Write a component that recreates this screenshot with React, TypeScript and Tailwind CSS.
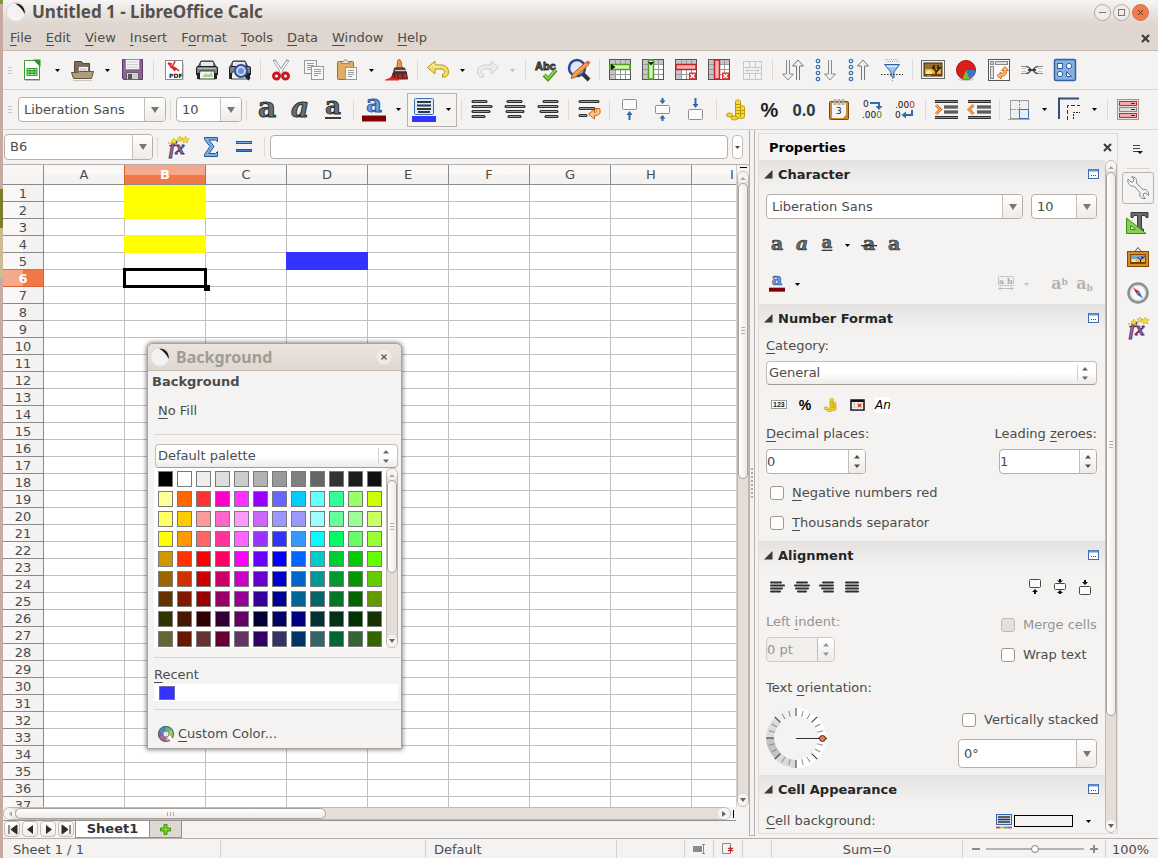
import { useState } from 'react'
import type { ReactNode } from 'react'

const palette = [
  '000000 ffffff eeeeee dddddd cccccc b2b2b2 999999 808080 666666 333333 1c1c1c 111111',
  'ffff99 ff6600 ff3333 ff00cc ff33ff 9900ff 6666ff 00ccff 66ffff 33ff99 99ff66 ccff00',
  'ffff66 ffcc00 ff9999 ff66cc ff99ff cc66ff 9999ff 9999ff 99ffff 66ff99 99ff99 ccff66',
  'ffff00 ff9900 ff6666 ff3399 ff66ff 9933ff 3333ff 3399ff 00ffff 00ff66 66ff66 99ff33',
  'cc9900 ff3300 ff0000 ff0066 ff00ff 6600ff 0000ff 0066ff 00cccc 00cc33 00cc00 66ff00',
  '996600 cc3300 cc0000 cc0066 cc00cc 6600cc 0000cc 0066cc 009999 009933 009900 66cc00',
  '663300 801900 990000 990066 990099 330099 000099 006699 006666 007826 006600 669900',
  '333300 461900 330000 330033 660066 000033 000066 000080 003333 00331a 003300 193300',
  '666633 661900 663333 660033 663366 330066 333366 003366 336666 006633 336633 336600',
].map((row) => row.split(' '))

const columns = ['A', 'B', 'C', 'D', 'E', 'F', 'G', 'H', 'I']
const rows = Array.from({ length: 37 }, (_, i) => i + 1)
const menus = ['_File', '_Edit', '_View', '_Insert', 'F_ormat', '_Tools', '_Data', '_Window', '_Help']

const fills: Record<string, string> = {
  B1: 'bg-[#ffff00] border-[#ffff00] shadow-[-1px_0_0_#ffff00,0_-1px_0_#ffff00]',
  B2: 'bg-[#ffff00] border-[#ffff00] shadow-[-1px_0_0_#ffff00,0_-1px_0_#ffff00]',
  B4: 'bg-[#ffff00] border-[#ffff00] shadow-[-1px_0_0_#ffff00,0_-1px_0_#ffff00,-1px_-1px_0_#ffff00]',
  D5: 'bg-[#3333ff] border-[#3333ff] shadow-[-1px_0_0_#3333ff,0_-1px_0_#3333ff,-1px_-1px_0_#3333ff]',
}

// "_File" underlines the letter after the underscore
function Mnemonic({ text }: { text: string }) {
  const i = text.indexOf('_')
  if (i < 0) return <>{text}</>
  return (
    <>
      {text.slice(0, i)}
      <span className="underline underline-offset-3">{text[i + 1]}</span>
      {text.slice(i + 2)}
    </>
  )
}

function Svg({ children, w = 24, h = 24 }: { children: ReactNode; w?: number; h?: number }) {
  return (
    <svg width={w} height={h} viewBox={`0 0 ${w} ${h}`} fill="none" aria-hidden="true" className="shrink-0 overflow-visible">
      {children}
    </svg>
  )
}

/* ---------- toolbar icons ---------- */

const NewIcon = () => (
  <Svg>
    <path d="M3.500 2.500h10l5 5v14h-15z" fill="#fff" stroke="#3a9a3a" />
    <path d="M12 1.500h7.500V9z" fill="#2c962c" />
    <rect x="5.500" y="10" width="11" height="8" fill="#2fa02f" />
    <path d="M6.500 11.500h2m1 0h3m1 0h2M6.500 14h2m1 0h3m1 0h2M6.500 16.500h2m1 0h3m1 0h2" stroke="#d3f3c8" />
    <path d="M4 22.500h15" stroke="#bdbdbd" />
  </Svg>
)
const OpenIcon = () => (
  <Svg>
    <path d="M3.500 5.500v-2h7l2 2h6v12h-15z" fill="#7d6b57" stroke="#54452f" />
    <path d="M7.500 8.500h10v9h-10z" fill="#f6f6f4" stroke="#777" />
    <path d="M9 11h7M9 13h7" stroke="#bbb" />
    <path d="M.5 14.500h6l2-1h14L20.500 20.500H2.500z" fill="#b09c80" stroke="#6c5737" />
    <path d="M2 22.500h19" stroke="#c9c5c0" />
  </Svg>
)
const SaveIcon = () => (
  <Svg>
    <path d="M1.500 1.500h20v20h-19l-1-1z" fill="#8f609b" stroke="#5d3a68" />
    <rect x="4.500" y="1.500" width="14" height="10" fill="#f6f6f6" stroke="#9c84a4" />
    <path d="M6 4h11M6 6.500h11M6 9h11" stroke="#ccc" />
    <rect x="5.500" y="14.500" width="12" height="7" fill="#cfcfcf" stroke="#666" />
    <rect x="7" y="16" width="4" height="5" fill="#555" />
  </Svg>
)
const PdfIcon = () => (
  <Svg>
    <rect x="3.500" y="2.500" width="17" height="19" fill="#fff" stroke="#8a8a8a" />
    <path d="M6 5l7 8M6 5l4 1M13 3c-1 3-3 6-5 6 3-1 6 1 9 4M11 9l3 3" stroke="#d92a2a" strokeWidth="1.500" />
    <path d="M20.500 21.500h1v-16" stroke="#ccc" />
    <text x="7" y="20" fontSize="6" fontWeight="bold" fontFamily="DejaVu Sans" fill="#111">PDF</text>
  </Svg>
)
const PrintIcon = () => (
  <Svg>
    <path d="M3 9l3-6h12l3 6z" fill="#70777a" stroke="#333" />
    <path d="M6 4h12v5H6z" fill="#e8e8e8" />
    <rect x="1.500" y="8.500" width="21" height="9" rx="1.500" fill="#7b8284" stroke="#1d1f20" />
    <path d="M3 10.500h18" stroke="#b5bbbc" />
    <path d="M5 13h14l1.500 8h-17z" fill="#f4f4f4" stroke="#444" />
    <path d="M7 19l4-4 2 2 4-3 1 5z" fill="#a6d68a" />
    <rect x="2" y="15" width="3" height="6" fill="#222" />
    <rect x="19" y="15" width="3" height="6" fill="#222" />
  </Svg>
)
const PreviewIcon = () => (
  <Svg>
    <path d="M2 9l3-6h12l3 6z" fill="#70777a" stroke="#333" />
    <path d="M5 4h12v5H5z" fill="#e8e8e8" />
    <rect x="1.500" y="8.500" width="21" height="9" rx="1.500" fill="#7b8284" stroke="#1d1f20" />
    <path d="M4 14h15l1 7H3z" fill="#f4f4f4" stroke="#444" />
    <rect x="1" y="15" width="3" height="6" fill="#222" />
    <rect x="19" y="15" width="3" height="6" fill="#222" />
    <circle cx="13" cy="13" r="6" fill="#c8d4f0" stroke="#2c4f9e" strokeWidth="2" />
    <circle cx="13" cy="13" r="3" fill="#6d8fd0" />
    <path d="M17.500 17.500l4 4" stroke="#222" strokeWidth="3" />
  </Svg>
)
const CutIcon = () => (
  <Svg>
    <path d="M5 2l8.500 13M19 2l-8.500 13" stroke="#8c8c8c" strokeWidth="3" />
    <path d="M5.500 3l8 12M18.500 3l-8 12" stroke="#fafafa" strokeWidth="1.500" />
    <ellipse cx="7.500" cy="18" rx="3" ry="3" stroke="#c81722" strokeWidth="3" />
    <ellipse cx="16.500" cy="18" rx="3" ry="3" stroke="#c81722" strokeWidth="3" />
  </Svg>
)
const CopyIcon = () => (
  <Svg>
    <rect x="2.500" y="2.500" width="12" height="13" fill="#f7f7f7" stroke="#999" />
    <path d="M5 5.500h7M5 7.500h7M5 9.500h7M5 11.500h4" stroke="#9a9a9a" />
    <rect x="9.500" y="8.500" width="12" height="13" fill="#f7f7f7" stroke="#999" />
    <path d="M12 11.500h7M12 13.500h7M12 15.500h7M12 17.500h4" stroke="#9a9a9a" />
  </Svg>
)
const PasteIcon = () => (
  <Svg>
    <rect x="2.500" y="3.500" width="16" height="18" rx="1" fill="#e0ad60" stroke="#9c6d24" />
    <path d="M6.500 5.500c0-2 2-1.500 2.500-3 .5-1 2.500-1 3 0 .5 1.500 2.500 1 2.500 3z" fill="#e6e6e6" stroke="#888" />
    <rect x="10.500" y="9.500" width="11" height="12" fill="#f7f7f7" stroke="#999" />
    <path d="M13 12.500h6M13 14.500h6M13 16.500h6M13 18.500h4" stroke="#9a9a9a" />
  </Svg>
)
const BrushIcon = () => (
  <Svg>
    <path d="M14 1.500c3 0 2 6 3.500 8.500h-6c1.500-3 0-8 2.500-8.500z" fill="#e79a43" stroke="#a9611b" />
    <path d="M9.500 10h10l2 5h-13z" fill="#555" stroke="#2d2d2d" />
    <path d="M10 12.500h11" stroke="#ccc" />
    <path d="M8 15h13.500l1 6h-18c2-1.500 3-3 3.500-6z" fill="#9a3030" stroke="#5f1717" />
    <path d="M10 15l-1 5M13 15v5M17 15l1 5" stroke="#4f1212" />
    <path d="M0 22c4-3 9-2 14-1v1.500H0z" fill="#ee2222" />
  </Svg>
)
const UndoIcon = () => (
  <Svg>
    <path d="M1.500 9.500L9 3v4h6c5 0 7.500 3 7.500 7 0 3-2 4.500-3.500 5h-2.500v-3c3 0 3-5-1.500-5H9V16z" fill="#f6dd66" stroke="#b3970f" />
    <path d="M4 9.500l4-3.500v2.500h7" stroke="#fdf5b8" />
  </Svg>
)
const RedoIcon = () => (
  <Svg>
    <path d="M22.500 9.500L15 3v4H9c-5 0-7.500 3-7.500 7 0 3 2 4.500 3.500 5h2.500v-3c-3 0-3-5 1.500-5h6V16z" fill="#ececeb" stroke="#cfcfcd" />
  </Svg>
)
const SpellIcon = () => (
  <Svg>
    <text x="1" y="12" fontSize="11" fontWeight="bold" fontFamily="Liberation Sans" fill="#777" stroke="#222" strokeWidth="0.800">Abc</text>
    <path d="M10 17l4 4 8-9" stroke="#4f9c1f" strokeWidth="4" />
    <path d="M10.500 17l3.500 3.500 7.500-8.500" stroke="#90dc56" strokeWidth="1.500" />
  </Svg>
)
const FindIcon = () => (
  <Svg>
    <path d="M16 16l6 6" stroke="#333" strokeWidth="4" />
    <circle cx="10" cy="10" r="8" fill="#dfe6f5" stroke="#2b4795" strokeWidth="2.500" />
    <path d="M4 20.500l1.500-4.500L19 4l3 2.500L8.500 19z" fill="#f0a04b" stroke="#b35d12" />
    <path d="M19 4l2-1.500 2.500 2L22 6.500z" fill="#ee5b5b" />
  </Svg>
)

function SheetIcon({ row, color, light, del }: { row: boolean; color: string; light: string; del?: boolean }) {
  return (
    <Svg>
      <rect x="1.500" y="1.500" width="21" height="20" fill="#fff" stroke="#555" />
      <path d="M2 2h20v5H2zM2 7h5v14H2z" fill="#c6c6c6" />
      <path d="M7.500 2v19M12.500 2v19M17.500 2v19M2 6.500h20M2 11.500h20M2 16.500h20" stroke="#999" />
      {row ? (
        <rect x="2" y="6.500" width="20" height="5" fill={light} stroke={color} strokeWidth="1.500" />
      ) : (
        <rect x="7.500" y="2" width="5" height="19" fill={light} stroke={color} strokeWidth="1.500" />
      )}
      {!del && row && <path d="M3 6l4.500 3L3 12z" fill="#111" />}
      {!del && !row && <path d="M7 4h6l-3 3.500z" fill="#222" />}
      {del && <rect x="15" y="14.500" width="7" height="7" fill="#e03030" />}
      {del && <path d="M16.500 16l4 4M20.500 16l-4 4" stroke="#fff" strokeWidth="1.500" />}
    </Svg>
  )
}
const MergeIcon = () => (
  <Svg>
    <rect x="3.500" y="3.500" width="18" height="18" stroke="#c8c8c7" />
    <path d="M3.500 9.500h18M3.500 15.500h18M9.500 3.500v6M15.500 3.500v6M9.500 15.500v6M15.500 15.500v6M6 12.500h13M8 10.500l-2 2 2 2M17 10.500l2 2-2 2" stroke="#c8c8c7" />
  </Svg>
)
const DownArrow = ({ x }: { x: number }) => (
  <path d={`M${x - 1.5} 2v14h-4l5.500 6 5.500-6h-4V2`} fill="#f2f2f2" stroke="#8b8b8b" />
)
const UpArrow = ({ x }: { x: number }) => (
  <path d={`M${x - 1.5} 22V8h-4L${x} 2l5.500 6h-4v14`} fill="#f2f2f2" stroke="#777" />
)
const Dots = () => (
  <g fill="#fff" stroke="#3d70b4" strokeWidth="1.300">
    <circle cx="4" cy="3" r="1.700" />
    <circle cx="4" cy="9" r="1.700" />
    <circle cx="4" cy="15" r="1.700" />
    <circle cx="4" cy="21" r="1.700" />
  </g>
)
const SortIcon = () => <Svg><DownArrow x={7} /><UpArrow x={17} /></Svg>
const SortDownIcon = () => <Svg><Dots /><DownArrow x={16} /></Svg>
const SortUpIcon = () => <Svg><Dots /><UpArrow x={16} /></Svg>
const FilterIcon = () => (
  <Svg>
    <path d="M5 1.500h14M6 3.500h13" stroke="#aaa" strokeDasharray="1 1" />
    <path d="M4.500 6.500h15L14 14v6l-3-2v-4z" fill="#9fc4ee" stroke="#2d66a8" />
    <path d="M7 8.500h10" stroke="#e4f0fc" />
    <path d="M1 16.500h22" stroke="#333" strokeDasharray="1.500 1.500" />
    <path d="M12.500 20v3" stroke="#888" strokeDasharray="1 1" />
  </Svg>
)

const PictureIcon = () => (
  <Svg>
    <rect x="0.500" y="2.500" width="23" height="18" fill="#f2f2f0" stroke="#6a6a66" />
    <rect x="3" y="5" width="18" height="13" fill="#96712c" stroke="#3d2c0f" />
    <path d="M4 11h16v6H4z" fill="#f2a72e" />
    <circle cx="8" cy="15" r="3" fill="#fde88c" />
    <path d="M15 17v-4l-4-4M15 14l5-5M17 12V7M13 11V7" stroke="#2c1a08" strokeWidth="1.500" />
    <path d="M4 16h16v1.500H4z" fill="#6d3d10" />
  </Svg>
)
const GalleryIcon = () => (
  <Svg>
    <path d="M8.500 6L12 1.500 15.500 6" stroke="#555" />
    <rect x="1.500" y="5.500" width="21" height="15" fill="#dc8b1d" stroke="#854a0a" />
    <rect x="4.500" y="8.500" width="15" height="9" fill="#7fa3cb" stroke="#854a0a" />
    <path d="M5 13h14v3H5z" fill="#f2b54e" />
    <circle cx="8" cy="15" r="2" fill="#fde88c" />
    <path d="M14.500 17v-3l-3-3M14.500 14l4-3.500M16 12.500V10" stroke="#2c1a08" />
    <path d="M5 16h14v1.500H5z" fill="#6d3d10" />
  </Svg>
)
const ChartIcon = () => (
  <Svg>
    <ellipse cx="12" cy="21.500" rx="8" ry="1.500" fill="#c9c9c9" />
    <circle cx="12" cy="12" r="9.500" fill="#e01b1b" stroke="#a10d0d" />
    <path d="M12 12h9.500a9.500 9.500 0 0 1-6.500 9z" fill="#3f74c4" />
    <path d="M12 12l3.500 9a9.500 9.500 0 0 1-7 0z" fill="#6cc332" />
  </Svg>
)
const PivotIcon = () => (
  <Svg>
    <rect x="1.500" y="1.500" width="21" height="21" fill="#fbfbfb" stroke="#555" />
    <rect x="3.500" y="3.500" width="3" height="3" fill="#ccc" stroke="#888" />
    <rect x="8.500" y="3.500" width="12" height="3" fill="#ddd" stroke="#888" />
    <rect x="3.500" y="8.500" width="3" height="12" fill="#ddd" stroke="#888" />
    <path d="M18 8.500l3.500 4h-2c0 4-1.500 6-5.500 6v2.500l-4-3.500 4-3.500v2c2 0 3-1 3-3.500h-2.500z" fill="#fbbd75" stroke="#d0701a" />
  </Svg>
)
const LinkIcon = () => (
  <Svg>
    <path d="M1 8.500h7M16 8.500h7M1 15.500h7M16 15.500h7" stroke="#8d9290" />
    <path d="M2 10.500h4M2 13.500h4M18 10.500h4M18 13.500h4" stroke="#bfc3c1" />
    <path d="M6 8.500c4 0 4 3 5.500 3.500M6 15.500c4 0 4-3 5.500-3.500M18 8.500c-4 0-4 3-5.500 3.500M18 15.500c-4 0-4-3-5.500-3.500" stroke="#59605e" strokeWidth="1.500" />
    <path d="M8 12h8" stroke="#3c4341" strokeWidth="2" />
  </Svg>
)
const ShapesIcon = () => (
  <Svg>
    <rect x="1.500" y="1.500" width="21" height="21" rx="1.500" fill="#86b0e2" stroke="#2f62a5" strokeWidth="1.500" />
    <g fill="#f4f8fd" stroke="#2f62a5">
      <rect x="4.500" y="5.500" width="5" height="5" />
      <circle cx="16" cy="8" r="2.700" />
      <circle cx="7" cy="16" r="2.700" />
      <path d="M13.500 18.500v-5l5 5z" />
    </g>
  </Svg>
)

/* ---------- formatting icons ---------- */

function LetterIcon({ size = 24, italic, line, strike, blue, bar }: { size?: number; italic?: boolean; line?: boolean; strike?: boolean; blue?: boolean; bar?: boolean }) {
  const raised = bar || line
  return (
    <svg width={size} height={size} viewBox="0 0 24 24" fill="none" aria-hidden="true" className="overflow-visible">
      <text
        x={12}
        y={bar ? 14 : line ? 16 : 19}
        textAnchor="middle"
        fontSize={raised ? 24 : 28}
        fontWeight="bold"
        fontStyle={italic ? 'italic' : 'normal'}
        fontFamily="DejaVu Serif"
        fill={blue ? '#6f9cdb' : '#697070'}
        stroke={blue ? '#2556a0' : '#2b2f2f'}
        strokeWidth={1}
      >
        a
      </text>
      {line && <path d="M4 20h16" stroke="#3a3a3a" strokeWidth="2" />}
      {strike && <path d="M0 13h24" stroke="#333" strokeWidth="2" />}
      {bar && <path d="M0 20.500h24" stroke="#7e0000" strokeWidth="6" />}
    </svg>
  )
}
const BackgroundIcon = () => (
  <Svg>
    <rect x="2.500" y="0.500" width="19" height="16" rx="1" fill="#dfeaf7" stroke="#3c6cab" />
    <path d="M5 4h14M5 7.500h14M5 11h14M6 14h12" stroke="#333a3f" strokeWidth="2" />
    <rect x="0" y="18" width="24" height="6" fill="#3333ff" />
  </Svg>
)

function LinesIcon({ spans, size = 24 }: { spans: number[][]; size?: number }) {
  const big = size === 24
  const gap = big ? 5 : 3
  return (
    <Svg w={size} h={size}>
      {spans.map(([a, b], i) => (
        <g key={i}>
          <path d={`M${a} ${3.5 + i * gap}H${b}`} stroke="#2f2f2f" strokeWidth={big ? 3 : 2} strokeLinecap="round" />
          {big && <path d={`M${a} ${3.5 + i * gap}H${b}`} stroke="#9a9a9a" />}
        </g>
      ))}
    </Svg>
  )
}
const WrapIcon = () => (
  <Svg>
    <path d="M3 3.500h18M3 10.500h14M3 17.500h6" stroke="#333" strokeWidth="3" strokeLinecap="round" />
    <path d="M3 3.500h18M3 10.500h14M3 17.500h6" stroke="#9a9a9a" />
    <path d="M18 10.500h4.500c2 5-.5 7-5 7v3.500L11.500 16l6-4.500v3c2.500 0 2.500-2 .5-4z" fill="#fbc48a" stroke="#c8620e" />
  </Svg>
)
function VAlignIcon({ kind }: { kind: 'top' | 'mid' | 'bottom' }) {
  const y = kind === 'top' ? 1.5 : kind === 'mid' ? 7.5 : 11.5
  return (
    <Svg>
      <rect x="4.500" y={y} width="14" height={kind === 'mid' ? 8 : 10} rx="1" fill="#fafafa" stroke="#8f8f8f" />
      <g fill="#2d66a8">
        {kind === 'top' && <path d="M11.500 13l3 4h-2v5h-2v-5h-2z" />}
        {kind === 'mid' && <path d="M11.500 6L8.500 2.500h2V0h2v2.500h2zM11.500 17l3 3.500h-2V23h-2v-2.500h-2z" />}
        {kind === 'bottom' && <path d="M11.500 10l-3-4h2V0h2v6h2z" />}
      </g>
    </Svg>
  )
}
function SmallVAlign({ kind }: { kind: 'top' | 'mid' | 'bottom' }) {
  const y = kind === 'top' ? 1.5 : kind === 'mid' ? 5.5 : 8.5
  return (
    <Svg w={16} h={18}>
      <rect x="2.500" y={y} width="11" height={kind === 'mid' ? 6 : 8} rx="1" fill="#fafafa" stroke="#4b4b45" />
      <g fill="#111">
        {kind === 'top' && <path d="M8 11l3 3H9v2H7v-2H5z" />}
        {kind === 'mid' && <path d="M8 5L5 2.500h2V1h2v1.500h2zM8 12l3 3H9v1H7v-1H5z" />}
        {kind === 'bottom' && <path d="M8 7L5 4h2V2h2v2h2z" />}
      </g>
    </Svg>
  )
}
function CoinsIcon({ size = 24 }: { size?: number }) {
  return (
    <svg width={size} height={size} viewBox="0 0 24 24" fill="none" aria-hidden="true">
      <path d="M10.500 3.500c0-2 5-2 5 0V8c3-.5 4 0 4 1.500v9c0 2-3.500 2.500-4.500 1.500-1.500 1-4.500.5-4.500-1.500z" fill="#f5d93a" stroke="#b99b06" />
      <path d="M11 6.500h4M11 9.500h4M11 12.500h8M11 15.500h8M15.500 8v11" stroke="#b99b06" />
      <ellipse cx="4.500" cy="17" rx="3" ry="2" fill="#f5d93a" stroke="#b99b06" />
      <ellipse cx="9.500" cy="20" rx="3.500" ry="2" fill="#f5d93a" stroke="#b99b06" />
    </svg>
  )
}
const DateIcon = () => (
  <Svg>
    <rect x="2.500" y="3.500" width="19" height="18" rx="1" fill="#c98a35" stroke="#7c4b0c" />
    <path d="M5 5h14v12l-3 3H5z" fill="#f3f3f3" />
    <path d="M8 7V1.500m4 5.500V1.500m4 5.500V1.500" stroke="#777" strokeWidth="2.500" />
    <path d="M8 7V2m4 5V2m4 5V2" stroke="#eee" />
    <text x="9" y="16" fontSize="9" fontFamily="DejaVu Sans" fill="#222">3</text>
  </Svg>
)
const AddDecimalIcon = () => (
  <Svg>
    <text x="3" y="9" fontSize="9" fontFamily="DejaVu Sans" fill="#111">0</text>
    <path d="M10 5h9v3" stroke="#3568a8" strokeWidth="2" />
    <path d="M15.500 8h7L19 12z" fill="#3568a8" />
    <text x="2" y="20" fontSize="9" fontFamily="DejaVu Sans" fill="#111">.00<tspan fill="#2b8a1c">0</tspan></text>
  </Svg>
)
const DelDecimalIcon = () => (
  <Svg>
    <text x="2" y="10" fontSize="9" fontFamily="DejaVu Sans" fill="#111">.00<tspan fill="#d01818">0</tspan></text>
    <text x="2" y="20" fontSize="9" fontFamily="DejaVu Sans" fill="#111">0</text>
    <path d="M12 17h7v-5" stroke="#3568a8" strokeWidth="2" />
    <path d="M13 13.500v7L8.500 17z" fill="#3568a8" />
  </Svg>
)
function IndentIcon({ back }: { back?: boolean }) {
  return (
    <Svg>
      <path d="M1 3.500h23M10 9h14M10 14h14M1 19.500h23" stroke="#2f2f2f" strokeWidth="3" />
      <path d="M1 3.500h23M10 9h14M10 14h14M1 19.500h23" stroke="#8d8d8d" />
      <path d={back ? 'M6.500 7l-4.500 4.500 4.500 4.500' : 'M2 7l4.500 4.500L2 16'} stroke="#d9782a" strokeWidth="3" />
      <path d={back ? 'M6.500 7l-4.500 4.500 4.500 4.500' : 'M2 7l4.500 4.500L2 16'} stroke="#fbc48a" />
    </Svg>
  )
}
const BordersIcon = () => (
  <Svg>
    <rect x="2.500" y="2.500" width="18" height="18" fill="#eef1f0" stroke="#9b9b9b" />
    <path d="M11.500 3v17M3 11.500h17" stroke="#777" strokeDasharray="1.500 1.500" />
    <rect x="11.500" y="11.500" width="9" height="9" fill="#e4eefa" stroke="#3f74b4" />
    <path d="M0 21.500h22" stroke="#aaa" />
  </Svg>
)
const LineStyleIcon = () => (
  <Svg>
    <path d="M1 21V0.500h20" stroke="#33507c" strokeWidth="2" />
    <path d="M9.500 22V7.500H22" stroke="#333" strokeDasharray="4 2" />
    <path d="M15.500 21v-6.500H22" stroke="#222" strokeDasharray="2 1" />
  </Svg>
)
const ConditionalIcon = () => (
  <Svg>
    <rect x="1.500" y="1.500" width="21" height="20" fill="#e3e3e3" stroke="#999" />
    <rect x="3.500" y="3.500" width="17" height="4" fill="#f7a8a8" stroke="#dc2020" />
    <rect x="3.500" y="9.500" width="17" height="4" fill="#ddd" stroke="#888" />
    <rect x="3.500" y="15.500" width="17" height="4" fill="#f7a8a8" stroke="#dc2020" />
    <path d="M15 5.500h4M15 11.500h4M15 17.500h4" stroke="#333" />
  </Svg>
)
const FxIcon = () => (
  <Svg>
    <text x="3" y="19" fontSize="19" fontWeight="bold" fontStyle="italic" fontFamily="Liberation Serif" fill="#9a6aa4" stroke="#54305e" strokeWidth="0.800">fx</text>
    <path d="M8 3l1 2 2 .5-1.500 1.500.3 2L8 8l-2 1 .5-2L5 5.500 7 5zM14 1l1 2h2l-1.500 1.500.5 2-2-1-2 1 .5-2L11 3h2zM19.500 1l1.200 2.500 2.500.3-2 1.800.6 2.400-2.300-1.200L17.200 8l.6-2.400-2-1.800 2.500-.3z" fill="#f8de2e" stroke="#bfa20c" strokeWidth="0.500" />
    <circle cx="3" cy="8" r="1" fill="#d9bd1c" />
  </Svg>
)
const SumIcon = () => (
  <Svg>
    <path d="M5.500 2.500h13v4l-2-1.500H10l5 6.500-5 7h6.500l2-2v5h-13v-2L11 11.500 5.500 4.500z" fill="#7fb0e8" stroke="#1f559c" />
  </Svg>
)
const EqualsIcon = () => (
  <Svg>
    <rect x="4.500" y="6.500" width="15" height="2" fill="#7fb0e8" stroke="#24589a" />
    <rect x="4.500" y="14.500" width="15" height="2" fill="#3f7cc8" stroke="#24589a" />
  </Svg>
)

/* ---------- toolbar parts ---------- */

const Grip = () => (
  <span className="flex w-[13px] shrink-0 flex-col items-center gap-[2px]">
    <span className="h-px w-1 bg-[#c9c5c1]" />
    <span className="h-px w-1 bg-[#c9c5c1]" />
    <span className="h-px w-1 bg-[#c9c5c1]" />
  </span>
)
const Sep = () => <span className="mr-[3px] ml-1 h-5 w-px shrink-0 bg-[#dcd9d6]" />

function Tool({ label, children, wide }: { label: string; children: ReactNode; wide?: boolean }) {
  return (
    <button type="button" aria-label={label} className={`flex h-[33px] shrink-0 items-center justify-center ${wide ? 'w-9' : 'w-[33px]'}`}>
      {children}
    </button>
  )
}
function Caret({ label, dim, small }: { label: string; dim?: boolean; small?: boolean }) {
  return (
    <button type="button" aria-label={label} className={`flex h-5 shrink-0 items-center justify-center ${small ? 'w-4' : 'w-[17px]'}`}>
      <Svg w={5} h={3}>
        <path d="M0 0h5L2.500 3z" fill={dim ? '#bdbdbd' : '#000'} />
      </Svg>
    </button>
  )
}

function Combo({ label, value, className, buttonClass }: { label: string; value: string; className: string; buttonClass: string }) {
  return (
    <div className={`flex shrink-0 overflow-hidden rounded border border-[#b9aea5] bg-white ${className}`}>
      <input aria-label={label} defaultValue={value} className="w-0 flex-1 px-[5px] outline-none" />
      <button
        type="button"
        aria-label={`${label} list`}
        className={`flex shrink-0 items-center justify-center border-l border-[#c5bdb6] bg-linear-to-b from-white to-[#eeebe8] ${buttonClass}`}
      >
        <Svg w={8} h={6}>
          <path d="M0 0h8L4 6z" fill="#777" />
        </Svg>
      </button>
    </div>
  )
}

const UpDown = () => (
  <Svg w={6} h={13}>
    <path d="M0 3.500h6L3 0zM0 9.500h6L3 13z" fill="currentColor" />
  </Svg>
)

function Select({ label, value, className }: { label: string; value: string; className: string }) {
  return (
    <div className={`relative ${className}`}>
      <select
        id={label}
        aria-label={label}
        className="h-6 w-full appearance-none rounded border border-[#c5bdb6] border-b-[#a59b93] bg-linear-to-b from-white via-white to-[#eeebe8] pl-[2px] outline-none"
      >
        <option>{value}</option>
      </select>
      <span className="pointer-events-none absolute inset-y-1 right-0 flex w-5 items-center border-l border-[#d5cfc9] pl-1 text-[#666]">
        <UpDown />
      </span>
    </div>
  )
}

function Spin({ id, value, className, disabled }: { id: string; value: string; className: string; disabled?: boolean }) {
  return (
    <div className={`flex h-[25px] overflow-hidden rounded border ${disabled ? 'border-[#d0cac5] bg-[#f1eeeb] text-[#949494]' : 'border-[#b9aea5] bg-white text-[#4c4c4c]'} ${className}`}>
      <input id={id} defaultValue={value} disabled={disabled} className="w-0 flex-1 outline-none" />
      <button type="button" aria-label={`${id} step`} disabled={disabled} className="flex w-[17px] items-center justify-center border-l border-[#c5bdb6] bg-linear-to-b from-white to-[#eeebe8]">
        <UpDown />
      </button>
    </div>
  )
}

function Check({ label, disabled }: { label: string; disabled?: boolean }) {
  return (
    <label className={`flex h-5 items-center gap-2 whitespace-nowrap ${disabled ? 'text-[#949494]' : ''}`}>
      <input
        type="checkbox"
        disabled={disabled}
        className="size-[14px] shrink-0 appearance-none rounded-[3px] border border-[#a3968b] bg-white disabled:border-[#c5bab2] disabled:bg-[#e6e0dc]"
      />
      <span><Mnemonic text={label} /></span>
    </label>
  )
}

// thumb and rest are relative lengths along the track
function ScrollBar({ thumb, rest, horizontal }: { thumb: number; rest: number; horizontal?: boolean }) {
  return (
    <div
      aria-hidden="true"
      className={`flex shrink-0 rounded-full border border-[#c3b8af] bg-[#e4ddd8] ${horizontal ? 'h-[13px] flex-1' : 'w-3 min-h-0 flex-1 flex-col'}`}
    >
      <span className={`flex items-center justify-center rounded-full bg-[#f7f5f4] ${horizontal ? 'w-[11px]' : 'h-[11px]'}`}>
        <Svg w={6} h={6}>
          <path d={horizontal ? 'M5 0v6L2 3z' : 'M0 5h6L3 2z'} fill="#aaa" />
        </Svg>
      </span>
      <span
        className={`flex items-center justify-center gap-[2px] rounded-full border border-[#aaa098] from-white to-[#eeebe8] ${horizontal ? 'bg-linear-to-b' : 'flex-col bg-linear-to-r'}`}
        style={{ flex: `${thumb} 1 0px` }}
      >
        {[0, 1, 2].map((i) => (
          <i key={i} className={`bg-[#b5aea8] ${horizontal ? 'h-1 w-px' : 'h-px w-1'}`} />
        ))}
      </span>
      <span style={{ flex: `${rest} 1 0px` }} />
      <span className={`flex items-center justify-center rounded-full bg-[#f7f5f4] ${horizontal ? 'w-3' : 'h-3'}`}>
        <Svg w={6} h={6}>
          <path d={horizontal ? 'M1 0v6l4-3z' : 'M0 1h6L3 5z'} fill="#666" />
        </Svg>
      </span>
    </div>
  )
}

const AppLogo = () => (
  <Svg w={20} h={20}>
    <circle cx="10" cy="10" r="9.500" fill="#f3f3f3" stroke="#dedad7" />
    <path d="M9 1.500a9 9 0 0 1 9.700 10.500C16.500 7.500 13.500 4 9 1.500z" fill="#1c1c1c" />
  </Svg>
)

function TitleBar() {
  return (
    <div className="flex h-6 shrink-0 items-center bg-linear-to-b from-[#f6f5f4] to-[#dfd6cf] pr-[9px] pl-[3px]">
      <AppLogo />
      <h1 className="flex-1 pl-[6px] font-['Noto_Sans'] text-[17px] leading-[22px] font-bold text-[#55514d]">Untitled 1 - LibreOffice Calc</h1>
      <div className="flex gap-[2px]">
        <button type="button" aria-label="Minimize">
          <Svg w={17} h={17}>
            <circle cx="8.500" cy="8.500" r="8" fill="#f0ece9" stroke="#b3a9a1" />
            <path d="M5 8.500h7" stroke="#777" />
          </Svg>
        </button>
        <button type="button" aria-label="Maximize">
          <Svg w={17} h={17}>
            <circle cx="8.500" cy="8.500" r="8" fill="#f0ece9" stroke="#b3a9a1" />
            <rect x="5.500" y="5.500" width="6" height="6" stroke="#777" />
          </Svg>
        </button>
        <button type="button" aria-label="Close">
          <Svg w={17} h={17}>
            <circle cx="8.500" cy="8.500" r="8" fill="#f07c4e" stroke="#d9704a" />
            <path d="M6 6l5 5M11 6l-5 5" stroke="#6d3420" />
          </Svg>
        </button>
      </div>
    </div>
  )
}

function MenuBar() {
  return (
    <nav className="flex h-[27px] shrink-0 items-center border-b border-[#c6bab0] bg-[#dfd6cf] pt-[2px] pr-2 pl-[7px]">
      <div className="flex flex-1 gap-[14px]">
        {menus.map((m) => (
          <button type="button" key={m}>
            <Mnemonic text={m} />
          </button>
        ))}
      </div>
      <button type="button" aria-label="Close document">
        <Svg w={9} h={9}>
          <path d="M1 1l7 7M8 1L1 8" stroke="#3c3c3c" strokeWidth="2.200" />
        </Svg>
      </button>
    </nav>
  )
}

function StandardToolbar() {
  return (
    <div className="flex h-[39px] shrink-0 items-center border-b border-[#d8d3ce]">
      <Grip />
      <Tool label="New"><NewIcon /></Tool>
      <Caret label="New options" />
      <Tool label="Open"><OpenIcon /></Tool>
      <Caret label="Open options" />
      <Tool label="Save"><SaveIcon /></Tool>
      <Sep />
      <Tool label="Export as PDF"><PdfIcon /></Tool>
      <Tool label="Print"><PrintIcon /></Tool>
      <Tool label="Print preview"><PreviewIcon /></Tool>
      <Sep />
      <Tool label="Cut"><CutIcon /></Tool>
      <Tool label="Copy"><CopyIcon /></Tool>
      <Tool label="Paste"><PasteIcon /></Tool>
      <Caret label="Paste options" />
      <Tool label="Clone formatting"><BrushIcon /></Tool>
      <Sep />
      <Tool label="Undo"><UndoIcon /></Tool>
      <Caret label="Undo list" />
      <Tool label="Redo"><RedoIcon /></Tool>
      <Caret label="Redo list" dim />
      <Sep />
      <Tool label="Spelling"><SpellIcon /></Tool>
      <Tool label="Find and replace"><FindIcon /></Tool>
      <Sep />
      <Tool label="Insert row"><SheetIcon row color="#4ea01c" light="#d7f2bf" /></Tool>
      <Tool label="Insert column"><SheetIcon row={false} color="#4ea01c" light="#d7f2bf" /></Tool>
      <Tool label="Delete row"><SheetIcon row del color="#c8202a" light="#f4b4b4" /></Tool>
      <Tool label="Delete column"><SheetIcon row={false} del color="#c8202a" light="#f4b4b4" /></Tool>
      <Tool label="Merge cells"><MergeIcon /></Tool>
      <Sep />
      <Tool label="Sort"><SortIcon /></Tool>
      <Tool label="Sort descending"><SortDownIcon /></Tool>
      <Tool label="Sort ascending"><SortUpIcon /></Tool>
      <Tool label="AutoFilter"><FilterIcon /></Tool>
      <Sep />
      <Tool label="Image"><PictureIcon /></Tool>
      <Tool label="Chart"><ChartIcon /></Tool>
      <Tool label="Pivot table"><PivotIcon /></Tool>
      <Tool label="Hyperlink"><LinkIcon /></Tool>
      <Tool label="Draw functions"><ShapesIcon /></Tool>
    </div>
  )
}

function FormattingToolbar() {
  return (
    <div className="flex h-10 shrink-0 items-center border-b border-[#d8d3ce]">
      <Grip />
      <Combo label="Font name" value="Liberation Sans" className="ml-[2px] h-[25px] w-[148px]" buttonClass="w-[21px]" />
      <Sep />
      <Combo label="Font size" value="10" className="ml-[2px] h-[25px] w-[66px]" buttonClass="w-[21px]" />
      <Sep />
      <Tool label="Bold"><LetterIcon /></Tool>
      <Tool label="Italic"><LetterIcon italic /></Tool>
      <Tool label="Underline"><LetterIcon line /></Tool>
      <Sep />
      <Tool label="Font color"><LetterIcon blue bar /></Tool>
      <Caret label="Font color list" />
      <div className="flex h-[34px] w-[50px] shrink-0 items-center justify-center border border-[#b4b1ae]">
        <Tool label="Background color"><BackgroundIcon /></Tool>
        <Caret label="Background color list" small />
      </div>
      <Sep />
      <Tool label="Align left"><LinesIcon spans={[[3, 16], [3, 21], [3, 19], [3, 14]]} /></Tool>
      <Tool label="Center"><LinesIcon spans={[[5, 18], [3, 21], [4, 20], [6, 17]]} /></Tool>
      <Tool label="Align right"><LinesIcon spans={[[8, 21], [3, 21], [5, 21], [10, 21]]} /></Tool>
      <Sep />
      <Tool label="Wrap text"><WrapIcon /></Tool>
      <Sep />
      <Tool label="Align top"><VAlignIcon kind="top" /></Tool>
      <Tool label="Center vertically"><VAlignIcon kind="mid" /></Tool>
      <Tool label="Align bottom"><VAlignIcon kind="bottom" /></Tool>
      <Sep />
      <Tool label="Currency"><CoinsIcon /></Tool>
      <Tool label="Percent"><span className="font-['Liberation_Sans'] text-xl font-bold text-[#1d1d1d]">%</span></Tool>
      <Tool label="Number" wide><span className="font-['Open_Sans'] text-base font-bold text-[#27404f]">0.0</span></Tool>
      <Tool label="Date"><DateIcon /></Tool>
      <Tool label="Add decimal place"><AddDecimalIcon /></Tool>
      <Tool label="Delete decimal place"><DelDecimalIcon /></Tool>
      <Sep />
      <Tool label="Increase indent"><IndentIcon /></Tool>
      <Tool label="Decrease indent"><IndentIcon back /></Tool>
      <Sep />
      <Tool label="Borders"><BordersIcon /></Tool>
      <Caret label="Borders list" />
      <Tool label="Border style"><LineStyleIcon /></Tool>
      <Caret label="Border style list" />
      <Sep />
      <Tool label="Conditional formatting"><ConditionalIcon /></Tool>
    </div>
  )
}

function FormulaBar() {
  return (
    <div className="flex h-[35px] shrink-0 items-center border-b border-[#b3b0ad] pl-px">
      <Combo label="Name box" value="B6" className="h-[26px] w-[149px]" buttonClass="w-5" />
      <Sep />
      <Tool label="Function wizard"><FxIcon /></Tool>
      <Tool label="Sum"><SumIcon /></Tool>
      <Tool label="Function"><EqualsIcon /></Tool>
      <Sep />
      <input aria-label="Formula" className="ml-[2px] h-6 w-0 flex-1 rounded border border-[#b9aea5] bg-white px-1 outline-none" />
      <button type="button" aria-label="Expand formula bar" className="mr-[6px] ml-1 flex h-6 w-[11px] items-center justify-center rounded border border-[#c5bdb6] bg-white">
        <Svg w={5} h={3}>
          <path d="M0 0h5L2.500 3z" fill="#444" />
        </Svg>
      </button>
    </div>
  )
}

function Sheet({ selected }: { selected: string }) {
  return (
    <div className="min-h-0 w-0 flex-1 overflow-hidden bg-white">
      <table className="w-[770px] table-fixed border-separate border-spacing-0 text-center leading-[14px]">
        <thead className="relative z-10">
          <tr className="h-5">
            <th className="w-[41px] border-r border-b border-[#8b8b8b] bg-linear-to-b from-[#f9f8f7] to-[#f4f3f2] p-0" />
            {columns.map((c) => (
              <th
                key={c}
                scope="col"
                className={`w-[81px] border-r border-b border-[#8b8b8b] p-0 ${c === selected[0]
                  ? 'border-r-[#d9622f] bg-linear-to-b from-[#f6a88a] from-50% to-[#f07746] to-50% font-bold text-white shadow-[-1px_0_0_#d9622f]'
                  : 'bg-linear-to-b from-[#f9f8f7] from-50% to-[#f3f2f1] to-50% font-normal'}`}
              >
                {c}
              </th>
            ))}
          </tr>
        </thead>
        <tbody>
          {rows.map((r) => (
            <tr key={r} className="h-[17px]">
              <th
                scope="row"
                className={`border-r border-b p-0 pt-[2px] ${String(r) === selected.slice(1)
                  ? 'border-[#d9622f] bg-linear-to-r from-[#f6a88a] from-50% to-[#f07746] to-50% font-bold text-white'
                  : 'border-[#8b8b8b] bg-linear-to-r from-[#f9f8f7] from-50% to-[#f3f2f1] to-50% font-normal'}`}
              >
                {r}
              </th>
              {columns.map((c) => (
                <td key={c} className={`relative border-r border-b p-0 ${fills[c + r] ?? 'border-[#c0c0c0]'}`}>
                  {c + r === selected && (
                    <div className="absolute -top-[2px] -left-[2px] z-10 h-5 w-[84px] border-3 border-black">
                      <span className="absolute -right-[6px] -bottom-[6px] size-[6px] bg-black" />
                    </div>
                  )}
                </td>
              ))}
            </tr>
          ))}
        </tbody>
      </table>
    </div>
  )
}

const navPaths = ['M1 0v9M9 0v9L3 4.500z', 'M7 0v9L1 4.500z', 'M2 0v9l6-4.500z', 'M0 0v9l6-4.500zM8 0v9']

function SheetTabs() {
  return (
    <div className="flex h-[17px] shrink-0">
      <div className="flex gap-[2px] pr-[1px] pl-px">
        {navPaths.map((d, i) => (
          <button type="button" key={d} aria-label={['First', 'Previous', 'Next', 'Last'][i] + ' sheet'} className="flex h-4 w-4 items-center justify-center rounded border border-[#c5bdb6] bg-linear-to-b from-white to-[#f0edeb]">
            <Svg w={9} h={9}>
              <path d={d} fill="#2d2d2d" stroke={i % 3 ? 'none' : '#2d2d2d'} />
            </Svg>
          </button>
        ))}
      </div>
      <button type="button" className="flex w-[75px] items-center justify-center border-x border-b border-[#929292] bg-white font-bold leading-4 text-[#333]">
        Sheet1
      </button>
      <button type="button" aria-label="Add sheet" className="flex w-8 items-center justify-center border-r border-b border-[#929292] bg-[#ded8d1]">
        <Svg w={11} h={11}>
          <path d="M4 .5h3V4h3.500v3H7v3.500H4V7H.5V4H4z" fill="#7ccf2f" stroke="#3f8f12" />
        </Svg>
      </button>
    </div>
  )
}

/* ---------- sidebar ---------- */

function Section({ title, children }: { title: string; children: ReactNode }) {
  return (
    <section>
      <div className="flex h-7 items-center bg-linear-to-b from-[#e3e2e1] to-[#f4f3f2] pr-[6px] pl-[5px]">
        <Svg w={9} h={9}>
          <path d="M8.500 0v8.500H0z" fill="#3a3a3a" />
        </Svg>
        <h2 className="flex-1 pt-[2px] pl-[5px] font-bold text-[#252525]">{title}</h2>
        <button type="button" aria-label={`${title} options`}>
          <Svg w={11} h={10}>
            <rect x="0.500" y="0.500" width="10" height="9" fill="#fff" stroke="#3b6cb4" />
            <path d="M1 1.500h9" stroke="#5a96de" strokeWidth="2" />
            <path d="M3 6.500h1m1 0h1m1 0h1" stroke="#35507e" />
          </Svg>
        </button>
      </div>
      <div className="flex flex-col pr-2 pl-[7px]">{children}</div>
    </section>
  )
}

function Small({ label, wide, children }: { label: string; wide?: boolean; children: ReactNode }) {
  return (
    <button type="button" aria-label={label} className={`flex h-5 shrink-0 items-center justify-center ${wide ? 'w-[26px]' : 'w-[25px]'}`}>
      {children}
    </button>
  )
}

function Dial() {
  const ticks = Array.from({ length: 24 }, (_, i) => i * 15)
  return (
    <Svg w={62} h={60}>
      <path d="M30 4a26 26 0 0 1 0 52" stroke="#fff" strokeWidth="8" />
      <path d="M30 4a26 26 0 0 0-18 8" stroke="#f1f1f0" strokeWidth="8" />
      <path d="M12 12A26 26 0 0 0 4 30" stroke="#dcdcdb" strokeWidth="8" />
      <path d="M4 30a26 26 0 0 0 8 18" stroke="#c2c2c1" strokeWidth="8" />
      <path d="M12 48a26 26 0 0 0 18 8" stroke="#d9d9d8" strokeWidth="8" />
      {ticks.map((a) => (
        <path key={a} d={a % 45 ? 'M52 30h6' : 'M52 30h8'} stroke={a % 45 ? '#8f8f8f' : '#333'} transform={`rotate(${a} 30 30)`} />
      ))}
      <path d="M30 30.500h31" stroke="#333" />
      <circle cx="56.500" cy="30.500" r="3" fill="#f07746" stroke="#333" />
    </Svg>
  )
}

function Sidebar() {
  return (
    <aside className="flex w-[403px] shrink-0 pl-[3px]">
      <div className="mt-[3px] mb-1 flex min-w-0 flex-1 flex-col border border-[#e0dedc]">
        <div className="flex h-[26px] shrink-0 items-center pr-[5px] pl-[10px]">
          <h2 className="flex-1 pt-[2px] font-bold text-black">Properties</h2>
          <button type="button" aria-label="Close sidebar">
            <Svg w={9} h={9}>
              <path d="M1 1l7 7M8 1L1 8" stroke="#3c3c3c" strokeWidth="2" />
            </Svg>
          </button>
        </div>
        <div className="flex min-h-0 flex-1">
          <div className="min-w-0 flex-1 overflow-hidden">
            <Section title="Character">
              <div className="flex justify-between gap-2 pt-[6px]">
                <Combo label="Character font" value="Liberation Sans" className="h-[25px] w-[257px]" buttonClass="w-5" />
                <Combo label="Character size" value="10" className="h-[25px] w-[66px]" buttonClass="w-5" />
              </div>
              <div className="-ml-[2px] mt-4 flex">
                <Small label="Bold"><LetterIcon size={16} /></Small>
                <Small label="Italic"><LetterIcon size={16} italic /></Small>
                <Small label="Underline"><LetterIcon size={16} line /></Small>
                <Caret label="Underline list" />
                <Small label="Strikethrough"><LetterIcon size={16} strike /></Small>
                <Small label="Shadow"><LetterIcon size={16} /></Small>
              </div>
              <div className="-ml-[2px] mt-[19px] flex pb-[10px]">
                <Small label="Font color"><LetterIcon size={16} blue bar /></Small>
                <Caret label="Font color list" />
                <span className="flex-1" />
                <Small label="Character spacing">
                  <Svg w={16} h={16}>
                    <rect x="0.500" y="0.500" width="15" height="9" rx="1" stroke="#c4c4c4" />
                    <text x="1" y="8" fontSize="8" fontWeight="bold" fontFamily="DejaVu Serif" fill="#aaa">a b</text>
                    <path d="M1 12.500h14M3 10.500l-2 2 2 2M13 10.500l2 2-2 2" stroke="#bbb" />
                  </Svg>
                </Small>
                <Caret label="Spacing list" dim />
                <span className="w-3" />
                <Small label="Superscript"><span className="font-['DejaVu_Serif'] text-base font-bold text-[#b4b4b4]">a<sup className="text-[9px]">b</sup></span></Small>
                <Small label="Subscript"><span className="font-['DejaVu_Serif'] text-base font-bold text-[#b4b4b4]">a<sub className="text-[9px]">b</sub></span></Small>
              </div>
            </Section>
            <Section title="Number Format">
              <label htmlFor="Category" className="mt-1 leading-5"><Mnemonic text="_Category:" /></label>
              <Select label="Category" value="General" className="mt-[5px]" />
              <div className="mt-[10px] flex">
                <Small wide label="Number">
                  <Svg w={16} h={10}>
                    <rect x="0.500" y="0.500" width="15" height="8" fill="#fff" stroke="#999" />
                    <text x="2" y="7" fontSize="7" fontWeight="bold" fontFamily="Liberation Sans" fill="#111">123</text>
                  </Svg>
                </Small>
                <Small wide label="Percent"><span className="font-['Liberation_Sans'] text-sm font-bold text-black">%</span></Small>
                <Small wide label="Currency"><CoinsIcon size={16} /></Small>
                <Small wide label="Date">
                  <Svg w={15} h={12}>
                    <rect x="1" y="1" width="13" height="10" fill="#fff" stroke="#111" strokeWidth="1.500" />
                    <path d="M1 2h13" stroke="#111" strokeWidth="2" />
                    <path d="M2 5h11M2 8h11M4.500 3v8M8 3v8M11 3v8" stroke="#aaa" strokeWidth="0.700" />
                    <rect x="8" y="5" width="3" height="3" fill="#e0451f" />
                  </Svg>
                </Small>
                <Small wide label="Text"><span className="bg-white font-['DejaVu_Sans'] text-xs text-black italic">An</span></Small>
              </div>
              <div className="mt-[9px] flex justify-between">
                <div>
                  <label htmlFor="decimals" className="block leading-5"><Mnemonic text="_Decimal places:" /></label>
                  <Spin id="decimals" value="0" className="mt-[5px] w-[100px]" />
                </div>
                <div className="flex flex-col items-end">
                  <label htmlFor="zeroes" className="block leading-5"><Mnemonic text="Leading _zeroes:" /></label>
                  <Spin id="zeroes" value="1" className="mt-[5px] w-[98px]" />
                </div>
              </div>
              <div className="mt-[9px] flex flex-col gap-[10px] pb-2 pl-1">
                <Check label="_Negative numbers red" />
                <Check label="_Thousands separator" />
              </div>
            </Section>
            <Section title="Alignment">
              <div className="-ml-[2px] mt-2 flex">
                <Small label="Left"><LinesIcon size={16} spans={[[2, 12], [2, 15], [2, 13], [2, 11]]} /></Small>
                <Small label="Center"><LinesIcon size={16} spans={[[3, 13], [1, 15], [2, 14], [4, 12]]} /></Small>
                <Small label="Right"><LinesIcon size={16} spans={[[4, 14], [1, 14], [3, 14], [5, 14]]} /></Small>
                <Small label="Justified"><LinesIcon size={16} spans={[[2, 14], [2, 14], [2, 14], [2, 14]]} /></Small>
                <span className="flex-1" />
                <Small label="Top"><SmallVAlign kind="top" /></Small>
                <Small label="Middle"><SmallVAlign kind="mid" /></Small>
                <Small label="Bottom"><SmallVAlign kind="bottom" /></Small>
              </div>
              <div className="mt-[15px] flex justify-between">
                <div>
                  <label htmlFor="indent" className="block leading-5 text-[#949494]"><Mnemonic text="Left _indent:" /></label>
                  <Spin id="indent" value="0 pt" disabled className="mt-[5px] w-[69px]" />
                </div>
                <div className="mt-[3px] flex w-[96px] flex-col gap-[10px]">
                  <Check label="Merge cells" disabled />
                  <Check label="Wrap text" />
                </div>
              </div>
              <div className="mt-[13px] leading-5"><Mnemonic text="Text _orientation:" /></div>
              <div className="mt-[10px] flex justify-between pb-[7px]">
                <Dial />
                <div className="flex w-[139px] flex-col justify-between pt-[2px]">
                  <div className="pl-1"><Check label="Vertically stacked" /></div>
                  <Combo label="Rotation" value="0°" className="h-[29px]" buttonClass="w-5" />
                </div>
              </div>
            </Section>
            <Section title="Cell Appearance">
              <div className="mt-2 flex items-center">
                <span className="flex-1 leading-5"><Mnemonic text="_Cell background:" /></span>
                <button type="button" aria-label="Cell background" className="flex items-center gap-[2px]">
                  <Svg w={16} h={16}>
                    <rect x="0.500" y="1.500" width="15" height="10" fill="#cfe0f4" stroke="#2f67b1" />
                    <path d="M2 4h12M2 6.500h12M2 9h12" stroke="#333" strokeWidth="1.500" />
                    <path d="M0 14.500h4" stroke="#d8485e" strokeWidth="2" />
                    <path d="M4 14.500h4" stroke="#dcb74c" strokeWidth="2" />
                    <path d="M8 14.500h4" stroke="#62b16e" strokeWidth="2" />
                    <path d="M12 14.500h4" stroke="#9a62b1" strokeWidth="2" />
                  </Svg>
                  <span className="h-3 w-[59px] border border-black bg-[#f5f4f3]" />
                </button>
                <span className="w-[7px]" />
                <Caret label="Cell background list" />
              </div>
            </Section>
          </div>
          <div className="flex flex-col">
            <ScrollBar thumb={544} rest={104} />
          </div>
        </div>
      </div>
      <div className="flex w-10 flex-col items-center">
        <button type="button" aria-label="Sidebar settings" className="mt-[9px] flex h-5 items-center">
          <Svg w={12} h={12}>
            <path d="M1 2.500h7M1 5.500h7M1 8.500h5" stroke="#445" />
            <path d="M5 8h6l-3 3z" fill="#112" />
          </Svg>
        </button>
        <span className="mt-[9px] mb-[3px] h-px w-[23px] bg-[#d8d5d2]" />
        <button type="button" aria-label="Properties" className="flex size-8 items-center justify-center rounded-[3px] border border-[#b5b2af]">
          <Svg>
            <path d="M2 3l3 3 2.500-.5L8 3 5.500.8C9 .5 11.500 3 10.500 7l6 6.500c4-1 6.500 2 6 6L20 17l-2.500.5-.5 2.500 2.500 2.500c-4 .5-6.500-2-5.500-6L8 10C4.500 11 1 7.500 2 3z" fill="#f6f6f6" stroke="#858585" />
          </Svg>
        </button>
        <button type="button" aria-label="Styles" className="mt-[3px] flex size-8 items-center justify-center">
          <Svg>
            <path d="M5 1.500h17v5h-2l-1-2h-3.500V18h2v2h-8v-2h2V4.500H8l-1 2H5z" fill="#666c6a" stroke="#383c3b" />
            <path d="M.5 7v15.500H20z" fill="#85d14f" stroke="#3c8f17" />
            <path d="M4.500 14.500v4h5z" fill="#f4f3f2" stroke="#3c8f17" />
          </Svg>
        </button>
        <button type="button" aria-label="Gallery" className="mt-[3px] flex size-8 items-center justify-center"><GalleryIcon /></button>
        <button type="button" aria-label="Navigator" className="mt-[3px] flex size-8 items-center justify-center">
          <Svg>
            <circle cx="12" cy="12" r="9.500" fill="#fafafa" stroke="#8a8f91" strokeWidth="2.500" />
            <circle cx="12" cy="12" r="7.500" stroke="#ccc" />
            <path d="M7 6.500l6.500 4L10.500 13z" fill="#d82626" />
            <path d="M17 17.500l-6.500-4L13.500 10.500z" fill="#3e72c4" />
          </Svg>
        </button>
        <button type="button" aria-label="Functions" className="mt-[3px] flex size-8 items-center justify-center"><FxIcon /></button>
      </div>
    </aside>
  )
}

function BackgroundDialog() {
  return (
    <div
      role="dialog"
      aria-label="Background"
      className="absolute top-[343px] left-[147px] flex w-[255px] flex-col rounded-t-md border border-[#aaa39d] bg-[#f4f3f2] shadow-[0_0_4px_1px_rgba(0,0,0,0.45)]"
    >
      <div className="flex h-[27px] items-center rounded-t-md border-b border-[#c6bab0] bg-linear-to-b from-[#ebe4df] to-[#dfd6cf] pr-[9px] pl-[2px]">
        <AppLogo />
        <h2 className="flex-1 pl-[6px] font-['Noto_Sans'] text-base font-bold text-[#a29b95]">Background</h2>
        <button type="button" aria-label="Close dialog">
          <Svg w={16} h={16}>
            <circle cx="8" cy="8" r="7.500" fill="#f0ebe7" />
            <path d="M5.500 5.500l5 5M10.500 5.500l-5 5" stroke="#5a5550" strokeWidth="1.300" />
          </Svg>
        </button>
      </div>
      <h3 className="mt-px pl-1 leading-5 font-bold">Background</h3>
      <button type="button" className="mt-[9px] ml-[10px] self-start leading-5"><Mnemonic text="_No Fill" /></button>
      <hr className="mt-[13px] ml-[6px] border-[#dad7d4]" />
      <Select label="Palette" value="Default palette" className="mt-[9px] mr-[3px] ml-[7px]" />
      <div className="mr-[3px] ml-[6px] flex h-[180px]">
        <div className="grid flex-1 auto-rows-[16px] grid-cols-[repeat(12,15px)] gap-x-1 gap-y-1 bg-white pt-[3px] pl-1">
          {palette.flat().map((color, i) => (
            <button
              type="button"
              key={i}
              aria-label={`#${color}`}
              className="border border-[#7a7a7a]"
              style={{ backgroundColor: `#${color}` }}
            />
          ))}
        </div>
        <div className="flex flex-col">
          <ScrollBar thumb={91} rest={62} />
        </div>
      </div>
      <hr className="mt-[9px] ml-[6px] border-[#dad7d4]" />
      <div className="mt-2 pl-[6px] leading-[18px]"><Mnemonic text="_Recent" /></div>
      <div className="mr-[3px] ml-[6px] flex h-[17px] items-center bg-white pl-[5px]">
        <button type="button" aria-label="#3333ff" className="h-[14px] w-4 border border-[#6d6da8] bg-[#3333ff]" />
      </div>
      <hr className="mt-2 ml-[6px] border-[#dad7d4]" />
      <button type="button" className="mt-[14px] mb-1 ml-[10px] flex items-center gap-1 self-start leading-5">
        <Svg w={16} h={16}>
          <path d="M8 8V0a8 8 0 0 1 7 4z" fill="#5ec26a" />
          <path d="M8 8l7-4a8 8 0 0 1 0 8z" fill="#8fd158" />
          <path d="M8 8l7 4a8 8 0 0 1-7 4z" fill="#d9a3a0" />
          <path d="M8 8v8a8 8 0 0 1-7-4z" fill="#c05a8c" />
          <path d="M8 8l-7 4a8 8 0 0 1 0-8z" fill="#7d62b8" />
          <path d="M8 8L1 4a8 8 0 0 1 7-4z" fill="#3f8fae" />
          <circle cx="8" cy="8" r="7.500" stroke="#59636b" />
          <path d="M8 8l6 6" stroke="#fff" strokeWidth="3" />
          <circle cx="8" cy="8" r="3" fill="#e9e9e9" stroke="#888" />
        </Svg>
        <span><Mnemonic text="_Custom Color..." /></span>
      </button>
    </div>
  )
}

function StatusBar() {
  const cell = 'flex h-[18px] shrink-0 items-center border-r border-[#d3d0cd]'
  return (
    <footer className="flex h-5 shrink-0 items-end border-t border-[#b3b0ad]">
      <span className={`${cell} w-[218px] pt-px pl-[10px]`}>Sheet 1 / 1</span>
      <span className={`${cell} w-[205px]`} />
      <span className={`${cell} w-[191px] pt-px pl-2`}>Default</span>
      <span className={`${cell} w-[68px]`} />
      <span className={`${cell} w-[29px] justify-center`}>
        <Svg w={13} h={12}>
          <rect x="0" y="3" width="9" height="6" fill="#8a8a8a" />
          <path d="M9 1.500h3M9 10.500h3M10.500 1.500v9" stroke="#8a8a8a" />
        </Svg>
      </span>
      <span className={`${cell} w-[29px] justify-center`}>
        <Svg w={12} h={12}>
          <path d="M8.500 4V.5h-8v10h8V9" stroke="#8a8a8a" />
          <path d="M8.500 3.500v6M6 5l5 3M11 5L6 8" stroke="#c02020" strokeWidth="1.300" />
        </Svg>
      </span>
      <span className={`${cell} w-[29px]`} />
      <span className={`${cell} min-w-0 flex-1 justify-center pt-px`}>Sum=0</span>
      <span className={`${cell} w-[143px] justify-center gap-[6px] pl-[2px]`}>
        <span className="h-[2px] w-2 bg-[#8a8a8a]" />
        <input
          type="range"
          aria-label="Zoom"
          className="h-3 w-[98px] appearance-none bg-transparent [&::-webkit-slider-runnable-track]:h-[2px] [&::-webkit-slider-runnable-track]:bg-[#b3b3b3] [&::-webkit-slider-thumb]:-mt-[3px] [&::-webkit-slider-thumb]:size-2 [&::-webkit-slider-thumb]:appearance-none [&::-webkit-slider-thumb]:rounded-full [&::-webkit-slider-thumb]:border [&::-webkit-slider-thumb]:border-[#808080] [&::-webkit-slider-thumb]:bg-white"
        />
        <Svg w={8} h={8}>
          <path d="M0 4h8M4 0v8" stroke="#8a8a8a" strokeWidth="2" />
        </Svg>
      </span>
      <span className="flex h-[18px] w-[52px] shrink-0 items-center pt-px pl-[6px]">100%</span>
    </footer>
  )
}

export default function App() {
  const [selected] = useState('B6')
  return (
    <div className="relative flex h-screen overflow-hidden bg-[#f4f3f2] font-['DejaVu_Sans',sans-serif] text-[13px] leading-4 text-[#4c4c4c]">
      <div className="flex w-[3px] shrink-0 flex-col bg-[#c9aaa2]">
        <span className="h-1 bg-[#7d9a3a]" />
        <span className="mt-[185px] h-[39px] bg-[#7c8028]" />
        <span className="h-[50px] bg-[#cdbb93]" />
      </div>
      <div className="flex min-w-0 flex-1 flex-col">
        <TitleBar />
        <MenuBar />
        <StandardToolbar />
        <FormattingToolbar />
        <div className="flex min-h-0 flex-1">
          <main className="flex min-w-0 flex-1 flex-col">
            <FormulaBar />
            <div className="flex min-h-0 flex-1">
              <Sheet selected={selected} />
              <div className="flex w-[13px] flex-col items-center border-l border-[#d5d1ce]">
                <span className="mt-[2px] mb-[3px] h-px w-[7px] shrink-0 bg-black" />
                <ScrollBar thumb={295} rest={317} />
              </div>
            </div>
            <div className="mr-[13px] flex shrink-0 items-center border-b border-[#929292]">
              <ScrollBar horizontal thumb={310} rest={394} />
              <span className="ml-[2px] mr-[2px] h-2 w-px bg-black" />
            </div>
            <SheetTabs />
          </main>
          <div className="mb-[2px] flex w-[6px] shrink-0 flex-col items-center justify-center gap-[2px] border-x border-b border-[#b3b0ad]">
            {[0, 1, 2, 3, 4, 5, 6, 7].map((i) => (
              <i key={i} className="size-[2px] bg-[#aaa7a4]" />
            ))}
          </div>
          <Sidebar />
        </div>
        <StatusBar />
      </div>
      <BackgroundDialog />
    </div>
  )
}
